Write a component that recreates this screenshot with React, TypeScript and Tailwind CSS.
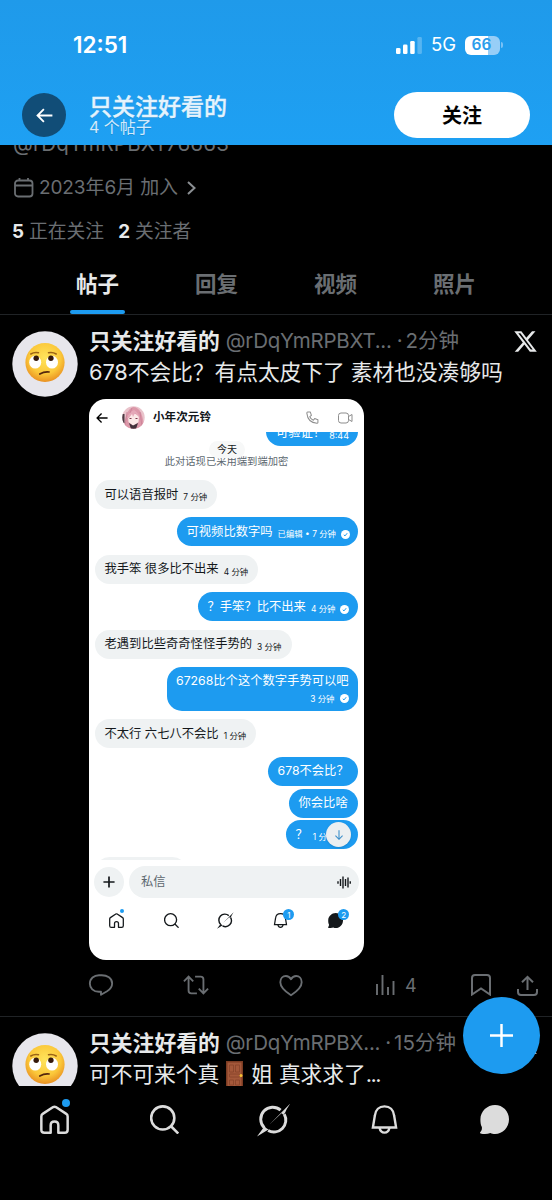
import type { ReactNode } from 'react';
import clsx from 'clsx';

type IconProps = { className?: string };
type Message = {
  text: string;
  meta?: string;
  mine?: boolean;
  read?: boolean;
  box: string;
};

const tabs = ['帖子', '回复', '视频', '照片'];

const messages: Message[] = [
  { text: '可以语音报时', meta: '7 分钟', box: 'w-[122px]' },
  { text: '可视频比数字吗', meta: '已编辑 • 7 分钟', mine: true, read: true, box: 'mt-[8.4px] w-[181px]' },
  { text: '我手笨 很多比不出来', meta: '4 分钟', box: 'mt-[8.4px] w-[163px]' },
  { text: '？手笨？比不出来', meta: '4 分钟', mine: true, read: true, box: 'mt-[8.4px] w-[160px]' },
  { text: '老遇到比些奇奇怪怪手势的', meta: '3 分钟', box: 'mt-[8.4px] w-[197px]' },
];

function Logo({ className }: IconProps) {
  return (
    <svg className={className} viewBox="1 2 22 20" fill="currentColor">
      <path d="M18.244 2.25h3.308l-7.227 8.26 8.502 11.24H16.17l-5.214-6.817L4.99 21.75H1.68l7.73-8.835L1.254 2.25H8.08l4.713 6.231zm-1.161 17.52h1.833L7.084 4.126H5.117z" />
    </svg>
  );
}

function Stroke({ className, width = 2, children }: IconProps & { width?: number; children: ReactNode }) {
  return (
    <svg className={className} viewBox="0 0 28 28" fill="none" stroke="currentColor" strokeWidth={width}>
      {children}
    </svg>
  );
}

function ArrowLeft({ className }: IconProps) {
  return (
    <Stroke className={className} width={3}>
      <path d="M27 14H3M13 3.5 2.5 14 13 24.5" />
    </Stroke>
  );
}

function Home({ className }: IconProps) {
  return (
    <Stroke className={className} width={2.4}>
      <path d="M1.300 11Q1.300 9.400 2.600 8.600L12.700 2Q14 1.200 15.300 2l10.100 6.600q1.300.8 1.300 2.400v12.800q0 3-3 3h-6V19.500q0-3.600-3.700-3.600t-3.700 3.600v7.300h-6q-3 0-3-3z" strokeLinejoin="round" />
    </Stroke>
  );
}

function Search({ className }: IconProps) {
  return (
    <Stroke className={className} width={2.5}>
      <circle cx="12.300" cy="12.500" r="11.200" />
      <path d="m20.300 20.500 7 7" />
    </Stroke>
  );
}

function Grok({ className }: IconProps) {
  return (
    <svg className={className} viewBox="0 0 34 34" fill="none" stroke="currentColor" strokeWidth="2.900">
      <path d="M7.300 24.800A12 12 0 0 1 23.600 7.200" />
      <path d="M27.300 11.200A12 12 0 0 1 11.100 27.600" />
      <path d="M0 33.500 7.500 23.300Q9.500 26 11.500 26.500ZM12.500 21.500 33.300.5Q29.500 6 28.200 9.500L26.500 12l-2-1.700Z" fill="currentColor" stroke="none" />
    </svg>
  );
}

function Bell({ className }: IconProps) {
  return (
    <Stroke className={className} width={2.3}>
      <path d="M2.800 21.700 4.700 10.200C5.300 4.700 8.800 1.300 14 1.300s8.700 3.400 9.300 8.900l1.900 11.500z" />
      <path d="M9.200 22c.6 3 2.300 4.700 4.800 4.700s4.200-1.700 4.800-4.700" />
    </Stroke>
  );
}

function Chat({ className }: IconProps) {
  return (
    <svg className={className} viewBox="0 0 28 28" fill="currentColor">
      <path d="M14.500 0C22 0 28 6 28 13.800S22 28 14.500 28c-1.800 0-3-.3-4.500-1-2.500 1-6 1.300-9.500.4C-.3 27.100 0 26.400.4 26c1.200-1.200 1.600-2.700 1.400-4.700C.5 18.900.4 16.500.4 13.800.4 6 7 0 14.500 0Z" />
    </svg>
  );
}

function EyeRollAvatar() {
  return (
    <svg className="size-[66px] shrink-0" viewBox="0 0 66 66">
      <defs>
        <radialGradient id="face" cx="50%" cy="38%" r="62%">
          <stop offset="0" stopColor="#ffe45c" />
          <stop offset=".65" stopColor="#fbc83a" />
          <stop offset="1" stopColor="#e99022" />
        </radialGradient>
      </defs>
      <circle cx="33" cy="33" r="32.700" fill="#e7e6ec" />
      <circle cx="33" cy="31.500" r="19.600" fill="url(#face)" />
      <ellipse cx="23.200" cy="31.200" rx="6" ry="6.400" fill="#fff" />
      <ellipse cx="40" cy="31.200" rx="6" ry="6.400" fill="#fff" />
      <circle cx="24.200" cy="27.300" r="2.700" fill="#35190b" />
      <circle cx="38.900" cy="27.300" r="2.700" fill="#35190b" />
      <path d="M18.800 23q3.500-2.300 7.700-1.300M36.500 21.700q4.200-1 7.700 1.300" fill="none" stroke="#9c6416" strokeWidth="1.500" strokeLinecap="round" />
      <path d="M27.800 43q4.500-2.600 9.300-2" fill="none" stroke="#54260c" strokeWidth="1.700" strokeLinecap="round" />
    </svg>
  );
}

function Door() {
  return (
    <svg className="mr-[8px] ml-[7px] inline-block h-[26px] w-[17px] shrink-0" viewBox="0 0 17 26">
      <rect width="17" height="26" fill="#7b3b22" />
      <rect x="1.500" y="1.500" width="14" height="24.500" fill="#a4583a" />
      <path d="M3.500 4h4v7h-4zM9.500 4h4v7h-4zM3.500 19h4v5h-4zM9.500 19h4v5h-4zM3.500 13h10v3h-10z" fill="#a4583a" stroke="#864329" strokeWidth=".8" />
      <circle cx="15" cy="14.500" r="1.500" fill="#f4c033" />
    </svg>
  );
}

function GirlAvatar() {
  return (
    <svg className="ml-[14px] size-[23px]" viewBox="0 0 23 23">
      <defs>
        <clipPath id="round">
          <circle cx="11.500" cy="11.500" r="11.200" />
        </clipPath>
      </defs>
      <g clipPath="url(#round)">
        <rect width="23" height="23" fill="#e9c3cb" />
        <path d="M2 23Q3 4 11 1q10 0 11 22z" fill="#dc98a9" />
        <path d="M0 8h2.500v9H0z" fill="#4b3a43" />
        <path d="M6 10q5-5 11 0l-.5 6-5 4-5-4z" fill="#fbe9e7" />
        <path d="M5 12q3-7 7-8 5 3 6 9l-2-3-3-3-2 4-1-3-3 4z" fill="#e5a9b8" />
        <path d="M7.500 12.500h2M13.500 12.500h2" stroke="#7b3a4c" strokeWidth="1" />
        <path d="m7 17 4 2.500 5-2.500-2 6H9z" fill="#43323b" />
        <path d="M5 6 3 20M18 6l2 14M10 2 8 7" stroke="#c77d93" strokeWidth=".7" />
      </g>
    </svg>
  );
}

function ReadMark() {
  return (
    <svg className="ml-[5px] size-[9px] shrink-0" viewBox="0 0 9 9">
      <circle cx="4.500" cy="4.500" r="4.500" fill="#fff" />
      <path d="m2.800 4.800 1.200 1.100 2.200-2.700" fill="none" stroke="#1d9bf0" strokeWidth="1" />
    </svg>
  );
}

function Bubble({ message }: { message: Message }) {
  const { text, meta, mine, read, box } = message;
  return (
    <div
      className={clsx(
        'flex h-[29px] shrink-0 items-center rounded-full px-[9.5px] whitespace-nowrap',
        mine ? 'self-end bg-[#1d9bf0] text-white' : 'self-start bg-[#eff2f3] text-[#14181b]',
        box,
      )}
    >
      <span className="text-[12.300px] leading-4">{text}</span>
      {meta ? <span className="mt-[5px] ml-[5px] text-[8.400px] leading-3">{meta}</span> : null}
      {read ? <span className="mt-[5px]"><ReadMark /></span> : null}
    </div>
  );
}

function Badge({ children }: { children: ReactNode }) {
  return (
    <span className="absolute -top-[4px] -right-[6px] flex size-[11px] items-center justify-center rounded-full bg-[#1d9bf0] text-[8px] leading-none text-white">
      {children}
    </span>
  );
}

function ChatShot() {
  return (
    <div className="mt-[12px] flex h-[561px] w-[275px] flex-col overflow-hidden rounded-[17px] bg-white">
      <div className="flex h-[33px] shrink-0 items-center pt-[4px] pl-[7px]">
        <ArrowLeft className="size-[12px] text-black" />
        <GirlAvatar />
        <span className="ml-[8px] text-[11.600px] font-bold text-[#14181b]">小年次元铃</span>
        <svg className="ml-auto size-[13px] text-[#8d8d8d]" viewBox="0 0 24 24" fill="none" stroke="currentColor" strokeWidth="1.900">
          <path d="M3 2h5l2 6-3 2.500q2 4.500 6.500 6.500l2.500-3 6 2v5q0 1.500-2 1.500Q3.500 22 1.500 4 1.500 2 3 2Z" strokeLinejoin="round" />
        </svg>
        <svg className="mr-[11px] ml-[19px] h-[12px] w-[15px] text-[#8d8d8d]" viewBox="0 0 30 24" fill="none" stroke="currentColor" strokeWidth="2">
          <rect x="1" y="2" width="20" height="20" rx="5" />
          <path d="m21 9 7-4v14l-7-4" />
        </svg>
      </div>

      <div className="relative flex h-[428px] shrink-0 flex-col overflow-hidden pr-[6px] pl-[6px]">
        <div className="-mt-[15px] flex h-[29px] w-[92px] shrink-0 items-center self-end rounded-full bg-[#1d9bf0] pl-[10px] whitespace-nowrap text-white">
          <span className="mt-[3px] text-[12.300px] leading-4">可验证！</span>
          <span className="mt-[9px] ml-[4px] text-[9px] leading-3">8:44</span>
        </div>
        <div className="mt-[7px] h-[17px] shrink-0 text-center text-[10.300px] leading-[17px] text-[#5d686f]">此对话现已采用端到端加密</div>
        <div className="absolute top-[9px] left-[120px] flex h-[17px] w-[36px] items-center justify-center rounded-full bg-[#f7f8f8] text-[10px] text-[#14181b]">今天</div>
        <div className="h-[10px] shrink-0" />
        {messages.map((message) => (
          <Bubble key={message.text} message={message} />
        ))}
        <div className="mt-[8.400px] h-[44px] w-[191.500px] shrink-0 self-end rounded-[15px] bg-[#1d9bf0] px-[9.500px] pt-[6px] whitespace-nowrap text-white">
          <div className="text-[12.300px] leading-4">67268比个这个数字手势可以吧</div>
          <div className="mt-[4px] flex items-center justify-end text-[8.400px] leading-3">
            3 分钟
            <ReadMark />
          </div>
        </div>
        <Bubble message={{ text: '不太行 六七八不会比', meta: '1 分钟', box: 'mt-[8.400px] w-[161px]' }} />
        <Bubble message={{ text: '678不会比？', mine: true, box: 'mt-[8.400px] w-[90px]' }} />
        <Bubble message={{ text: '你会比啥', mine: true, box: 'mt-[2.800px] w-[69px]' }} />
        <Bubble message={{ text: '？', meta: '1 分钟', mine: true, box: 'mt-[2.800px] w-[72px]' }} />
        <div className="absolute top-[390px] right-[13px] flex size-[25px] items-center justify-center rounded-full bg-[#eceff1] shadow">
          <Stroke className="size-[10px] text-[#3b8ec9]" width={3}>
            <path d="M14 1v25M4 16l10 10 10-10" />
          </Stroke>
        </div>
        <div className="mt-[8px] h-[29px] w-[92px] shrink-0 rounded-full bg-[#eff2f3]" />
      </div>

      <div className="mt-[6px] flex shrink-0 items-center pl-[5px]">
        <div className="flex size-[30px] items-center justify-center rounded-full bg-[#eff2f3]">
          <Stroke className="size-[12px] text-[#14181b]" width={4}>
            <path d="M14 1v26M1 14h26" />
          </Stroke>
        </div>
        <div className="ml-[5px] flex h-[32px] w-[230px] items-center justify-between rounded-full bg-[#eff2f3] pr-[8px] pl-[12px]">
          <span className="text-[12.300px] text-[#5d686f]">私信</span>
          <svg className="h-[13px] w-[14px] text-[#14181b]" viewBox="0 0 28 26" fill="none" stroke="currentColor" strokeWidth="2.800">
            <path d="M2 10.500v5M7 6v14M12 1v24M17 6v14M22 3v20M26.500 10.500v5" />
          </svg>
        </div>
      </div>

      <div className="mt-[15px] flex shrink-0 pr-px text-[#14181b]">
        <div className="flex flex-1 justify-center">
          <span className="relative">
            <Home className="size-[15px]" />
            <span className="absolute -top-[4px] right-0 size-[4px] rounded-full bg-[#1d9bf0]" />
          </span>
        </div>
        <div className="flex flex-1 justify-center"><Search className="size-[15px]" /></div>
        <div className="flex flex-1 justify-center"><Grok className="-mt-px size-[17px]" /></div>
        <div className="flex flex-1 justify-center">
          <span className="relative">
            <Bell className="size-[15px]" />
            <Badge>1</Badge>
          </span>
        </div>
        <div className="flex flex-1 justify-center">
          <span className="relative">
            <Chat className="size-[15px]" />
            <Badge>2</Badge>
          </span>
        </div>
      </div>
    </div>
  );
}

function Post({ handle, time, body, children }: { handle: string; time: string; body: ReactNode; children?: ReactNode }) {
  return (
    <article className="flex pt-[16px] pl-[12px]">
      <EyeRollAvatar />
      <div className="ml-[11px] flex-1">
        <div className="-mt-[5px] flex h-[30px] items-center whitespace-nowrap">
          <span className="text-[21.800px] font-bold text-[#e7e9ea]">只关注好看的</span>
          <span className="ml-[6px] text-[20.500px] tracking-[-0.25px] text-[#6a6e72]">{handle}</span>
          <span className="ml-[5px] text-[20.500px] text-[#6a6e72]">·</span>
          <span className="ml-[3px] text-[20.500px] text-[#6a6e72]">{time}</span>
          <Logo className="mr-[15px] ml-auto h-[23px] w-[23px] text-[#e7e9ea]" />
        </div>
        <div className="flex h-[31px] items-center pt-px text-[21.800px] tracking-[-0.1px] whitespace-nowrap text-[#e7e9ea]">{body}</div>
        {children}
      </div>
    </article>
  );
}

export default function App() {
  return (
    <div className="relative flex h-[1200px] w-[552px] flex-col overflow-hidden bg-black font-['Inter','Noto_Sans_CJK_SC',sans-serif]">
      <header className="z-10 h-[145px] shrink-0 bg-linear-to-b from-[#1f9aea] to-[#1ea0f3] text-white">
        <div className="flex h-[92px] items-center pr-[49px] pb-[2px] pl-[73px]">
          <span className="text-[22.500px] font-semibold">12:51</span>
          <svg className="ml-auto h-[18px] w-[28px]" viewBox="0 0 28 18" fill="#fff">
            <rect x="1" y="12" width="4.500" height="6" rx="1.300" />
            <rect x="8" y="8.500" width="4.500" height="9.500" rx="1.300" />
            <rect x="15.200" y="5" width="4.500" height="13" rx="1.300" />
            <rect x="22.400" y="1" width="4.500" height="17" rx="1.300" opacity=".25" />
          </svg>
          <span className="ml-[8px] text-[18.500px]">5G</span>
          <div className="ml-[9px] flex h-[19px] w-[35px] items-center justify-center rounded-[6px] bg-linear-to-r from-white from-67% to-[#97cef7] to-67% pr-[2px] text-[15.500px] leading-none font-semibold text-[#2b9dec]">66</div>
          <div className="ml-px h-[6px] w-[2px] rounded-r-full bg-[#79c1f5]" />
        </div>
        <div className="flex h-[46px] items-center pr-[22px] pl-[22px]">
          <button className="flex size-[44px] items-center justify-center rounded-full bg-[#114d77]">
            <ArrowLeft className="size-[17px]" />
          </button>
          <div className="ml-[23px] text-shadow-2xs">
            <div className="text-[23px] leading-[24px] font-medium text-[#e4f3fd] [-webkit-text-stroke:0.4px_#e4f3fd]">只关注好看的</div>
            <div className="text-[16px] leading-[17px] text-[#d2eafc]">4 个帖子</div>
          </div>
          <button className="ml-auto h-[46px] w-[136px] rounded-full bg-white pt-px text-[20px] font-bold text-black">关注</button>
        </div>
      </header>

      <main className="h-[941px] shrink-0 overflow-hidden">
        <div className="-mt-[16px] h-[28px] pl-[13px] text-[20.500px] leading-[30px] tracking-[0.2px] text-[#6a6e72]">@rDqYmRPBXT76663</div>
        <div className="mt-[16px] flex h-[30px] items-center pl-[14px] text-[19px] tracking-[-0.1px] whitespace-nowrap text-[#6a6e72]">
          <svg className="h-[20px] w-[20px]" viewBox="0 0 20 20" fill="none" stroke="currentColor" strokeWidth="1.800">
            <rect x="1" y="2.500" width="17.500" height="16" rx="3" />
            <path d="M1 7.500h17.500M5.500 0v3M14 0v3" />
          </svg>
          <span className="ml-[5px]">2023年6月 加入</span>
          <svg className="ml-[9px] h-[14px] w-[9px] text-[#8b8f93]" viewBox="0 0 9 14" fill="none" stroke="currentColor" strokeWidth="2">
            <path d="m1 1 6.500 6L1 13" />
          </svg>
        </div>
        <div className="mt-[14px] flex h-[30px] items-center pl-[12px] text-[18.800px] whitespace-nowrap text-[#6a6e72]">
          <span className="font-bold text-[#e7e9ea]">5</span>
          <span className="ml-[5px]">正在关注</span>
          <span className="ml-[14px] font-bold text-[#e7e9ea]">2</span>
          <span className="ml-[5px]">关注者</span>
        </div>
        <div className="mt-[6px] flex h-[62px] border-b border-[#202326] pr-[38px] pl-[38px]">
          {tabs.map((tab, index) => (
            <div
              key={tab}
              className={clsx('relative flex flex-1 items-center justify-center pt-[2px] text-[21.500px] font-bold', index === 0 ? 'text-[#e7e9ea]' : 'text-[#6a6e72]')}
            >
              {tab}
              {index === 0 ? <span className="absolute bottom-0 h-[4px] w-[55px] rounded-full bg-[#1d9bf0]" /> : null}
            </div>
          ))}
        </div>

        <Post handle="@rDqYmRPBXT..." time="2分钟" body="678不会比？有点太皮下了 素材也没凑够吗">
          <ChatShot />
          <div className="flex h-[56px] items-center pb-[6px] text-[#6a6e72]">
            <Stroke className="-ml-px size-[26px]">
              <path d="M14 24.500v-3.200h-2.200C5.600 21.300 2 17.200 2 12.600 2 7 6.500 3.500 11.800 3.500h3C20.500 3.500 26 6.500 26 12.300c0 4-2.500 6.500-5.500 8.500z" strokeLinejoin="round" />
            </Stroke>
            <Stroke className="ml-[69px] size-[26px]">
              <path d="M1 10l5-5 5 5M6 5v15q0 3 3 3h6M27 18l-5 5-5-5M22 23V8q0-3-3-3h-6" />
            </Stroke>
            <Stroke className="ml-[69px] size-[26px]">
              <path d="M14 25C7 20.500 2.500 16 2.500 11c0-4 2.700-6.700 6-6.700 2.400 0 4.200 1.200 5.500 3.500 1.300-2.300 3.100-3.500 5.500-3.500 3.300 0 6 2.700 6 6.700 0 5-4.500 9.500-11.500 14z" strokeLinejoin="round" />
            </Stroke>
            <svg className="ml-[72px] h-[20px] w-[19px]" viewBox="0 0 19 20" fill="none" stroke="currentColor" strokeWidth="1.900">
              <path d="M1 20V9M6.500 20V0M12 20v-8M17.500 20V6" />
            </svg>
            <span className="ml-[10px] text-[18px]">4</span>
            <svg className="ml-[54px] h-[22px] w-[20px]" viewBox="0 0 20 22" fill="none" stroke="currentColor" strokeWidth="2">
              <path d="M1 4q0-3 3-3h12q3 0 3 3v16.500l-9-6-9 6z" />
            </svg>
            <svg className="ml-[26px] h-[21px] w-[21px]" viewBox="0 0 21 21" fill="none" stroke="currentColor" strokeWidth="2">
              <path d="M10.500 15V2M5 7.300 10.500 1.800 16 7.300M1 14v3q0 3 3 3h13q3 0 3-3v-3" />
            </svg>
          </div>
        </Post>
        <div className="h-px bg-[#202326]" />
        <Post
          handle="@rDqYmRPBX..."
          time="15分钟"
          body={
            <>
              可不可来个真
              <Door />
              姐 真求求了
              <span className="tracking-[-1.500px]">...</span>
            </>
          }
        />
      </main>

      <nav className="z-10 flex h-[114px] shrink-0 bg-black pt-[19px] pr-[3px] text-[#dcdcdc]">
        <div className="flex flex-1 justify-center">
          <span className="relative h-[29px]">
            <Home className="size-[29px]" />
            <span className="absolute -top-[6px] -right-px size-[8px] rounded-full bg-[#1d9bf0]" />
          </span>
        </div>
        <div className="flex flex-1 justify-center"><Search className="size-[29px]" /></div>
        <div className="flex flex-1 justify-center"><Grok className="-mt-[2px] size-[34px]" /></div>
        <div className="flex flex-1 justify-center"><Bell className="size-[29px]" /></div>
        <div className="flex flex-1 justify-center"><Chat className="size-[29px]" /></div>
      </nav>

      <button className="absolute top-[997px] left-[463px] z-20 flex size-[77px] items-center justify-center rounded-full bg-[#1d9bf0] text-white">
        <Stroke className="size-[23px]" width={3}>
          <path d="M14 0v28M0 14h28" />
        </Stroke>
      </button>
    </div>
  );
}
